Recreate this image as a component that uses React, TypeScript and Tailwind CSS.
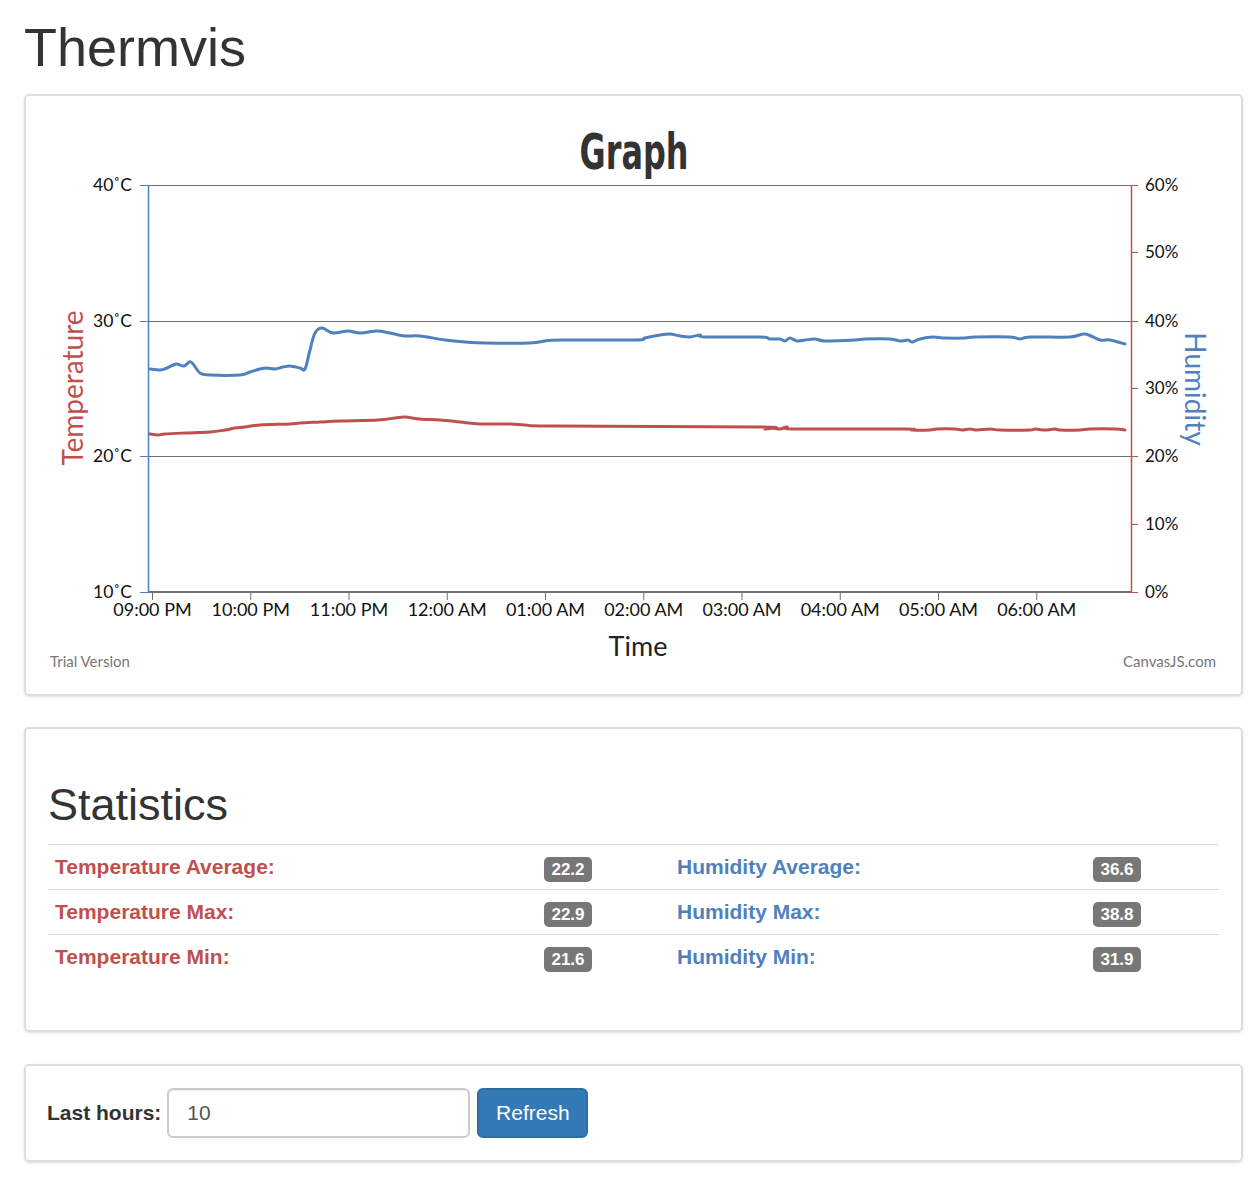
import React from 'react'

const humidity: number[][] = [
  [150, 369], [160, 370], [167, 368], [176, 364], [184, 366], [191, 362], [200, 373], [210, 375],
  [240, 375], [250, 372], [260, 369], [267, 368], [275, 369], [283, 367], [290, 366], [300, 368],
  [305, 369], [310, 350], [315, 333], [322, 328], [333, 333], [348, 331], [360, 333], [377, 331],
  [390, 333], [405, 336], [420, 336], [445, 340], [465, 342], [485, 343], [530, 343], [545, 341],
  [560, 340], [635, 340], [645, 338], [660, 335], [670, 334], [680, 336], [690, 337], [700, 335],
  [705, 337], [760, 337], [770, 339], [780, 339], [785, 341], [790, 338], [797, 341], [805, 340],
  [815, 339], [825, 341], [855, 340], [865, 339], [890, 339], [900, 341], [908, 340], [912, 342],
  [920, 339], [933, 337], [945, 338], [965, 338], [975, 337], [1010, 337], [1020, 339], [1030, 337],
  [1070, 337], [1085, 334], [1100, 340], [1110, 340], [1125, 344],
]

const temperature: number[][] = [
  [150, 434], [158, 435], [165, 434], [185, 433], [210, 432], [225, 430], [235, 428], [245, 427],
  [260, 425], [290, 424], [300, 423], [320, 422], [340, 421], [378, 420], [395, 418], [405, 417],
  [420, 419], [440, 420], [460, 422], [480, 424], [510, 424], [525, 425], [555, 426], [760, 427],
  [765, 429], [772, 428], [780, 429], [787, 427], [795, 429], [905, 429], [912, 430], [930, 430],
  [937, 429], [955, 429], [962, 430], [970, 429], [977, 430], [990, 429], [1000, 430], [1030, 430],
  [1035, 429], [1045, 430], [1055, 429], [1060, 430], [1080, 430], [1090, 429], [1115, 429],
  [1125, 430],
]

// catmull-rom -> cubic bezier
function smooth(pts: number[][]) {
  let d = `M${pts[0][0]},${pts[0][1]}`
  for (let i = 0; i < pts.length - 1; i++) {
    const p0 = pts[i - 1] || pts[i]
    const p1 = pts[i]
    const p2 = pts[i + 1]
    const p3 = pts[i + 2] || p2
    const c1x = p1[0] + (p2[0] - p0[0]) / 6
    const c1y = p1[1] + (p2[1] - p0[1]) / 6
    const c2x = p2[0] - (p3[0] - p1[0]) / 6
    const c2y = p2[1] - (p3[1] - p1[1]) / 6
    d += ` C${c1x},${c1y} ${c2x},${c2y} ${p2[0]},${p2[1]}`
  }
  return d
}

const hours = ['09:00 PM', '10:00 PM', '11:00 PM', '12:00 AM', '01:00 AM', '02:00 AM', '03:00 AM', '04:00 AM', '05:00 AM', '06:00 AM']
const leftTicks = [
  { y: 185, label: '40˚C' },
  { y: 321, label: '30˚C' },
  { y: 456, label: '20˚C' },
  { y: 592, label: '10˚C' },
]
const rightTicks = [
  { y: 185, label: '60%' },
  { y: 252, label: '50%' },
  { y: 321, label: '40%' },
  { y: 388, label: '30%' },
  { y: 456, label: '20%' },
  { y: 524, label: '10%' },
  { y: 592, label: '0%' },
]

const RED = '#c0504e'
const BLUE = '#4f81bc'

function Chart() {
  const font = 'Lato, "Open Sans", sans-serif'
  return (
    <svg width={1215} height={597} viewBox="26 96 1215 597" className="block">
      <text x={634} y={169} textAnchor="middle" fontFamily='"DejaVu Sans", sans-serif' fontWeight="bold" fontSize={50} fill="#333" textLength={109} lengthAdjust="spacingAndGlyphs">
        Graph
      </text>

      {[185, 321, 456].map((y) => (
        <line key={y} x1={148} x2={1131} y1={y + 0.5} y2={y + 0.5} stroke="#6f6f6f" strokeWidth={1} />
      ))}
      <line x1={148} x2={1131} y1={592} y2={592} stroke="#6f6f6f" strokeWidth={2} />

      <line x1={148.5} x2={148.5} y1={185} y2={593} stroke={BLUE} strokeWidth={1.5} />
      {leftTicks.map((t) => (
        <g key={t.y}>
          <line x1={140} x2={148} y1={t.y + 0.5} y2={t.y + 0.5} stroke={BLUE} strokeWidth={1} />
          <text x={132} y={t.y + 6} textAnchor="end" fontFamily={font} fontSize={17.5} fill="#111">
            {t.label}
          </text>
        </g>
      ))}

      <line x1={1131.5} x2={1131.5} y1={185} y2={593} stroke={RED} strokeWidth={1.5} />
      {rightTicks.map((t) => (
        <g key={t.y}>
          <line x1={1131} x2={1138} y1={t.y + 0.5} y2={t.y + 0.5} stroke={RED} strokeWidth={1} />
          <text x={1145} y={t.y + 6} fontFamily={font} fontSize={17} fill="#111">
            {t.label}
          </text>
        </g>
      ))}

      {hours.map((h, i) => {
        const x = 152.5 + i * 98.25
        return (
          <g key={h}>
            <line x1={x} x2={x} y1={592} y2={600} stroke="#6f6f6f" strokeWidth={1} />
            <text x={x} y={616} textAnchor="middle" fontFamily={font} fontSize={18} fill="#111">
              {h}
            </text>
          </g>
        )
      })}

      <path d={smooth(humidity)} fill="none" stroke={BLUE} strokeWidth={3} strokeLinejoin="round" strokeLinecap="round" />
      <path d={smooth(temperature)} fill="none" stroke={RED} strokeWidth={3} strokeLinejoin="round" strokeLinecap="round" />

      <text x={638} y={656} textAnchor="middle" fontFamily={font} fontSize={27} fill="#222">
        Time
      </text>
      <text transform="translate(83 388) rotate(-90)" textAnchor="middle" fontFamily={font} fontSize={28} fill={RED}>
        Temperature
      </text>
      <text transform="translate(1185 389) rotate(90)" textAnchor="middle" fontFamily={font} fontSize={28} fill={BLUE}>
        Humidity
      </text>

      <text x={50} y={667} fontFamily={font} fontSize={15} fill="#777">
        Trial Version
      </text>
      <text x={1216} y={667} textAnchor="end" fontFamily={font} fontSize={15} fill="#777">
        CanvasJS.com
      </text>
    </svg>
  )
}

function Badge({ value }: { value: string }) {
  return (
    <span className="mt-[5px] flex h-[25px] w-[48px] items-center justify-center rounded-[5px] bg-[#777] text-[17px] font-bold text-white">
      {value}
    </span>
  )
}

const rows = [
  ['Temperature Average:', '22.2', 'Humidity Average:', '36.6'],
  ['Temperature Max:', '22.9', 'Humidity Max:', '38.8'],
  ['Temperature Min:', '21.6', 'Humidity Min:', '31.9'],
]

export default function App() {
  return (
    <div className="min-h-[1180px] bg-white pl-[24px] pt-[18px] text-[#333]" style={{ fontFamily: '"Liberation Sans", Arial, sans-serif' }}>
      <div className="w-[1219px]">
        <h1 className="mb-[17px] text-[54px] leading-[59px]">Thermvis</h1>

        <div className="h-[602px] overflow-hidden rounded-[5px] border-2 border-[#ddd] shadow-sm">
          <Chart />
        </div>

        <div className="mt-[31px] h-[305px] rounded-[5px] border-2 border-[#ddd] px-[22px] pt-[51px] shadow-sm">
          <h2 className="mb-[14px] text-[45px] leading-[50px]">Statistics</h2>
          <div>
            {rows.map((r) => (
              <div key={r[0]} className="grid h-[45px] grid-cols-[488px_133px_416px_135px] items-center border-t border-[#ddd] text-[21px] font-bold">
                <span className="pl-[7px] text-[#c0504e]">{r[0]}</span>
                <span className="pl-[8px]">
                  <Badge value={r[1]} />
                </span>
                <span className="pl-[8px] text-[#4f81bc]">{r[2]}</span>
                <span className="pl-[8px]">
                  <Badge value={r[3]} />
                </span>
              </div>
            ))}
          </div>
        </div>

        <div className="mt-[32px] flex h-[98px] items-center rounded-[5px] border-2 border-[#ddd] px-[21px] shadow-sm">
          <label className="mr-[6px] text-[21px] font-bold">Last hours:</label>
          <input
            defaultValue="10"
            className="h-[50px] w-[303px] rounded-[6px] border-2 border-[#ccc] px-[18px] text-[21px] text-[#555] shadow-[inset_0_1px_1px_rgba(0,0,0,0.075)] outline-none"
          />
          <button className="ml-[7px] h-[50px] w-[111px] rounded-[6px] border-2 border-[#2e6da4] bg-[#337ab7] text-[21px] text-white">
            Refresh
          </button>
        </div>
      </div>
    </div>
  )
}
